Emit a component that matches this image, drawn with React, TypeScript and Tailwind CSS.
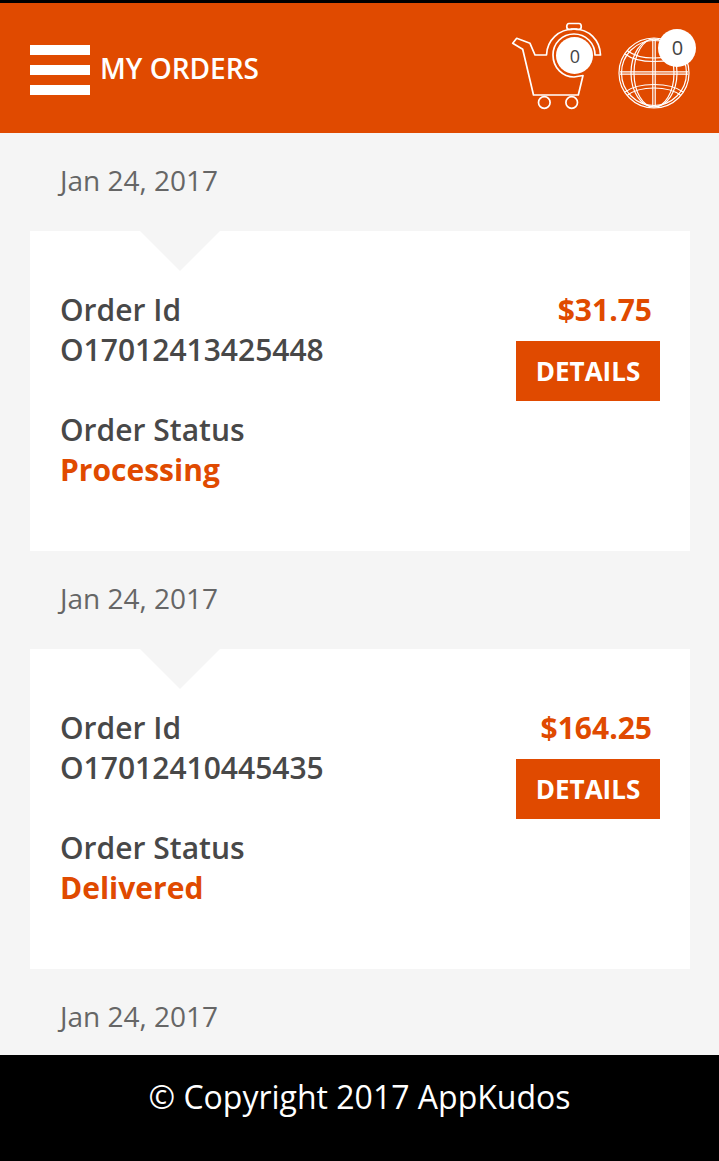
import React from 'react';

type Order = {
  date: string;
  id: string;
  price: string;
  status: string;
};

const orders: Order[] = [
  { date: 'Jan 24, 2017', id: 'O17012413425448', price: '$31.75', status: 'Processing' },
  { date: 'Jan 24, 2017', id: 'O17012410445435', price: '$164.25', status: 'Delivered' },
];

function CartIcon() {
  return (
    <svg width="92" height="90" viewBox="0 0 92 90" fill="none" stroke="white" strokeWidth="1.7" className="block">
      {/* handle, basket and the clock ring in one line */}
      <path d="M2.7 23.3 L6.7 18.3 L20 23.3 L25 35 H36.5 C37 20 49 9 64 9 C79 9 90 20 90.5 35 H85 C85 23 75.5 14 64 14 C52.5 14 43 23 43 35 C43 48 53 57 64 57 L73 55.5 L68.3 75 H23.5 L12.7 29.3 Z" strokeLinejoin="round" />
      {/* knob on top */}
      <path d="M59 3.5 H69 C72 3.5 72 9.5 69 9.5 H66.5 V9 H61.5 V9.5 H59 C56 9.5 56 3.5 59 3.5 Z" />
      <circle cx="34.3" cy="82.5" r="5.8" />
      <circle cx="61.7" cy="82.5" r="5.8" />
    </svg>
  );
}

function GlobeIcon() {
  return (
    <svg width="72" height="72" viewBox="0 0 72 72" fill="none" stroke="white" strokeWidth="1.2" className="block">
      <circle cx="36" cy="36" r="35" />
      <circle cx="36" cy="36" r="32.5" />
      <ellipse cx="36" cy="36" rx="23" ry="34" />
      <ellipse cx="36" cy="36" rx="20" ry="34" />
      <path d="M34.8 2 V70 M37.2 2 V70" />
      <path d="M2 34.8 H70 M2 37.2 H70" />
      <path d="M7 17 C20 27 52 27 65 17 M9 13.5 C22 23.5 50 23.5 63 13.5" />
      <path d="M7 55 C20 45 52 45 65 55 M9 58.5 C22 48.5 50 48.5 63 58.5" />
    </svg>
  );
}

function OrderCard({ order }: { order: Order }) {
  return (
    <div>
      <p className="h-[98px] pl-[60px] pt-[27px] text-[28px] leading-[41px] text-[#666666]">{order.date}</p>
      <div className="relative ml-[30px] flex h-[320px] w-[660px] justify-between bg-white px-[30px] pt-[59px]">
        <div className="absolute left-[110px] top-0 h-0 w-0 border-x-[40px] border-t-[40px] border-x-transparent border-t-[#f5f5f5]" />
        <div className="text-[30px] font-semibold leading-[40px] text-[#484848]">
          <p>Order Id</p>
          <p>{order.id}</p>
          <p className="mt-[40px]">Order Status</p>
          <p className="font-bold text-[#e04a00]">{order.status}</p>
        </div>
        <div className="flex flex-col items-end">
          <p className="pr-[8px] text-[30px] font-bold leading-[40px] text-[#e04a00]">{order.price}</p>
          <button className="mt-[11px] h-[60px] w-[144px] bg-[#e04a00] text-[26px] font-bold text-white">DETAILS</button>
        </div>
      </div>
    </div>
  );
}

export default function App() {
  return (
    <div className="flex h-screen flex-col overflow-hidden border-t-[3px] border-black bg-[#f5f5f5] font-['Open_Sans',sans-serif]">
      <header className="flex h-[130px] shrink-0 items-center justify-between bg-[#e04a00] pl-[30px] pr-[29px]">
        <div className="flex items-center gap-[10px]">
          <div className="mt-[4px] flex w-[60px] flex-col gap-[10px]">
            <span className="h-[10px] bg-white" />
            <span className="h-[10px] bg-white" />
            <span className="h-[10px] bg-white" />
          </div>
          <h1 className="text-[28px] font-semibold text-white">MY ORDERS</h1>
        </div>
        <div className="-mt-[6px] flex items-start gap-[16px]">
          <div className="relative">
            <CartIcon />
            <span className="absolute left-[46px] top-[17px] flex h-[37px] w-[37px] items-center justify-center rounded-full bg-white pl-[1px] pt-[2px] text-[18px] font-medium text-[#444444]">0</span>
          </div>
          <div className="relative mt-[17px] h-[72px] w-[72px]">
            <GlobeIcon />
            <span className="absolute left-[40px] top-[-8px] flex h-[38px] w-[38px] items-center justify-center rounded-full bg-white pl-[1px] text-[20px] font-medium text-[#444444]">0</span>
          </div>
        </div>
      </header>
      <main className="min-h-0 flex-1 overflow-hidden">
        {orders.map((order) => (
          <OrderCard key={order.id} order={order} />
        ))}
        <p className="h-[98px] pl-[60px] pt-[27px] text-[28px] leading-[41px] text-[#666666]">Jan 24, 2017</p>
      </main>
      <footer className="h-[106px] shrink-0 bg-black pt-[20px] text-center text-[32px] leading-[44px] text-white">
        © Copyright 2017 AppKudos
      </footer>
    </div>
  );
}
